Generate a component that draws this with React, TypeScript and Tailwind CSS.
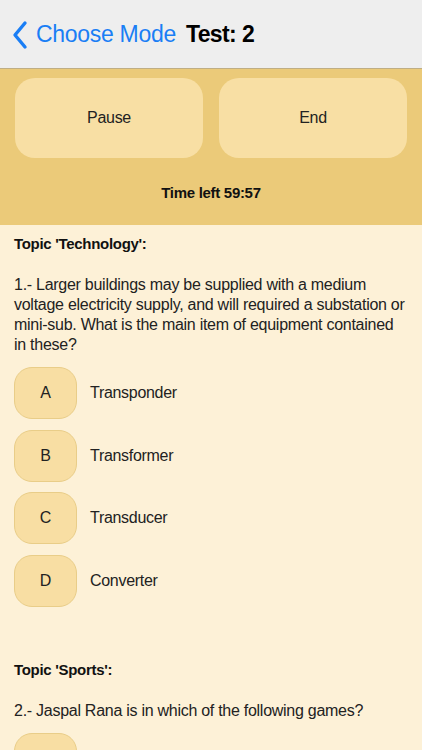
import React from "react";

const font = { fontFamily: '"Liberation Sans", Arial, sans-serif' };

const options = [
  { letter: "A", text: "Transponder" },
  { letter: "B", text: "Transformer" },
  { letter: "C", text: "Transducer" },
  { letter: "D", text: "Converter" },
];

const OptionRow = ({ letter, text }: { letter: string; text: string }) => (
  <div className="flex items-center">
    <button className="flex h-[52px] w-[63px] items-center justify-center rounded-[18px] border border-[#e9cd88] bg-[#f8dea3] text-[16px] text-[#222]">
      {letter}
    </button>
    {text && (
      <span className="ml-[13px] text-[16px] tracking-[-0.3px] text-[#222]">
        {text}
      </span>
    )}
  </div>
);

export default function App() {
  return (
    <div className="h-[750px] w-[422px] overflow-hidden bg-[#fdf1d7]" style={font}>
      {/* nav bar */}
      <div className="flex h-[69px] items-center border-b border-[#bfae84] bg-[#eeeeee] pl-[11px]">
        <svg width="17" height="30" viewBox="0 0 17 30" className="mt-[1px]">
          <path
            d="M14 3 L4 15 L14 27"
            fill="none"
            stroke="#1a7ef5"
            strokeWidth="3.4"
            strokeLinecap="round"
            strokeLinejoin="round"
          />
        </svg>
        <span className="ml-[8px] text-[23px] tracking-[-0.3px] text-[#1a7ef5]">
          Choose Mode
        </span>
        <span className="ml-[10px] text-[23px] font-bold tracking-[-0.6px] text-black">
          Test: 2
        </span>
      </div>

      {/* controls */}
      <div className="flex h-[156px] flex-col bg-[#ebca79] px-[15px] pt-[9px]">
        <div className="flex gap-4">
          <button className="flex h-[80px] flex-1 items-center justify-center rounded-[20px] bg-[#f8dfa4] text-[16px] tracking-[-0.3px] text-[#222]">
            Pause
          </button>
          <button className="flex h-[80px] flex-1 items-center justify-center rounded-[20px] bg-[#f8dfa4] text-[16px] tracking-[-0.3px] text-[#222]">
            End
          </button>
        </div>
        <div className="mt-[24px] text-center text-[15px] font-bold tracking-[-0.3px] text-[#111]">
          Time left 59:57
        </div>
      </div>

      {/* questions */}
      <div className="px-[14px]">
        <div className="mt-[9px] text-[15px] font-bold leading-[20px] tracking-[-0.3px] text-[#111]">
          Topic 'Technology':
        </div>
        <p className="mt-[21px] text-[16px] leading-[20px] tracking-[-0.27px] whitespace-nowrap text-[#222]">
          1.- Larger buildings may be supplied with a medium
          <br />
          voltage electricity supply, and will required a substation or
          <br />
          mini-sub. What is the main item of equipment contained
          <br />
          in these?
        </p>
        <div className="mt-[12px] flex flex-col gap-[10.5px]">
          {options.map((o) => (
            <OptionRow key={o.letter} letter={o.letter} text={o.text} />
          ))}
        </div>

        <div className="mt-[53px] text-[15px] font-bold leading-[20px] tracking-[-0.3px] text-[#111]">
          Topic 'Sports':
        </div>
        <p className="mt-[21px] text-[16px] leading-[20px] tracking-[-0.27px] text-[#222]">
          2.- Jaspal Rana is in which of the following games?
        </p>
        <div className="mt-[12px] flex flex-col">
          <OptionRow letter="" text="" />
        </div>
      </div>
    </div>
  );
}
